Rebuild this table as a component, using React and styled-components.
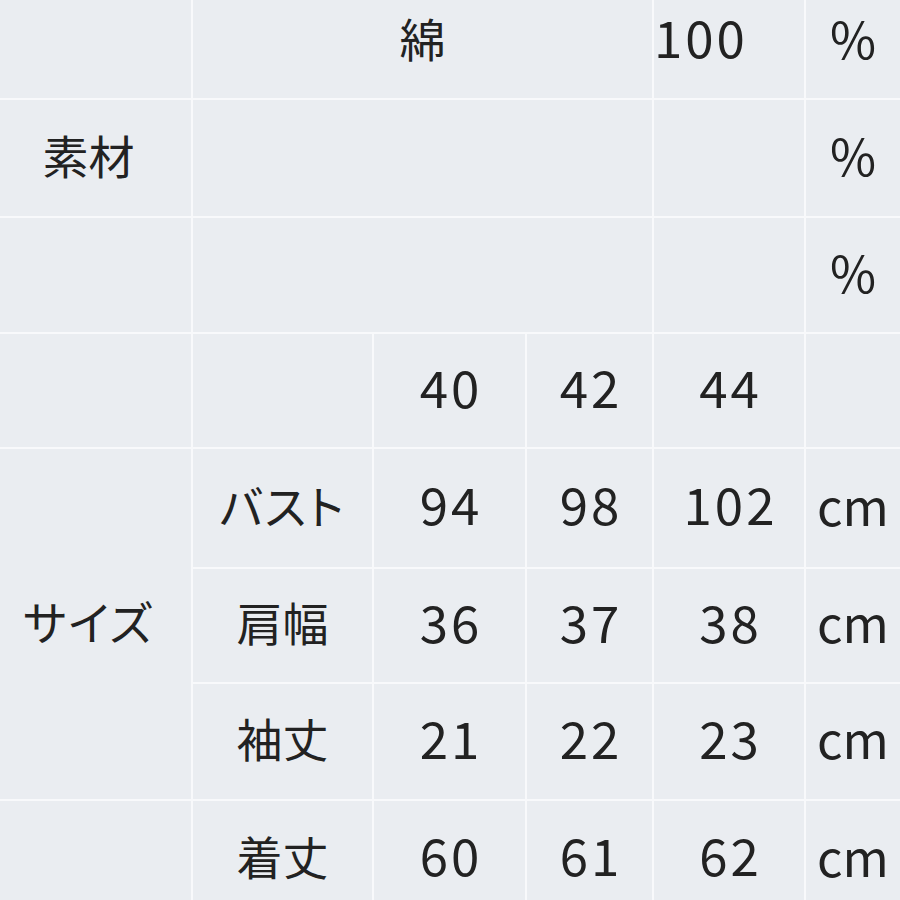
import React from "react";
import styled, { createGlobalStyle } from "styled-components";

// Page reset: the table fills the window edge to edge
const GlobalStyle = createGlobalStyle`
  html, body {
    margin: 0;
    padding: 0;
    background: #f8f9fb;
    overflow: hidden;
  }
  body {
    font-family: "Noto Sans CJK JP", "Noto Sans", sans-serif;
    color: #222;
  }
`;

const Sheet = styled.div`
  width: 900px;
  height: 900px;
  overflow: hidden;
`;

// The white gaps between cells are the grid lines
const Table = styled.div`
  display: grid;
  grid-template-columns: 191px 179px 151px 125px 150px 94px;
  grid-template-rows: 114px 116px 114px 113px 118px 113px 115px 116px;
  gap: 2px;
  margin-top: -16px;
  background: #f8f9fb;
`;

const Cell = styled.div`
  grid-column: ${(p) => p.col} / span ${(p) => p.colSpan || 1};
  grid-row: ${(p) => p.row} / span ${(p) => p.rowSpan || 1};
  display: flex;
  align-items: center;
  justify-content: ${(p) => (p.left ? "flex-start" : "center")};
  padding: 0 ${(p) => (p.head ? "14px" : "0")} 9px 0;
  background: #eaedf1;
  font-size: 46px;
  line-height: 1;
  white-space: nowrap;
`;

// katakana/kanji labels use proportional widths like the original
const Label = styled.span`
  font-feature-settings: "palt";
  letter-spacing: ${(p) => p.spacing || "0"};
`;

const Num = styled.span`
  font-size: 51px;
  letter-spacing: 3px;
  margin-right: -3px;
`;

const Unit = styled.span`
  font-size: 50px;
`;

const sizeRows = [
  { label: "バスト", values: ["94", "98", "102"] },
  { label: "肩幅", values: ["36", "37", "38"] },
  { label: "袖丈", values: ["21", "22", "23"] },
  { label: "着丈", values: ["60", "61", "62"] },
];

export default function App() {
  return (
    <Sheet>
      <GlobalStyle />
      <Table>
        {/* 素材 block */}
        <Cell row={1} col={1} />
        <Cell row={1} col={2} colSpan={3}>綿</Cell>
        <Cell row={1} col={5} left>
          <Num>100</Num>
        </Cell>
        <Cell row={1} col={6}><Unit>%</Unit></Cell>

        <Cell row={2} col={1} head>素材</Cell>
        <Cell row={2} col={2} colSpan={3} />
        <Cell row={2} col={5} />
        <Cell row={2} col={6}><Unit>%</Unit></Cell>

        <Cell row={3} col={1} />
        <Cell row={3} col={2} colSpan={3} />
        <Cell row={3} col={5} />
        <Cell row={3} col={6}><Unit>%</Unit></Cell>

        {/* size header */}
        <Cell row={4} col={1} />
        <Cell row={4} col={2} />
        {["40", "42", "44"].map((s, i) => (
          <Cell key={s} row={4} col={3 + i}>
            <Num>{s}</Num>
          </Cell>
        ))}
        <Cell row={4} col={6} />

        <Cell row={5} col={1} rowSpan={3} head>
          <Label spacing="2px">サイズ</Label>
        </Cell>
        <Cell row={8} col={1} />

        {sizeRows.map((r, ri) => (
          <React.Fragment key={r.label}>
            <Cell row={5 + ri} col={2}>
              <Label spacing={ri === 0 ? "2px" : "0"}>{r.label}</Label>
            </Cell>
            {r.values.map((v, vi) => (
              <Cell key={vi} row={5 + ri} col={3 + vi}>
                <Num>{v}</Num>
              </Cell>
            ))}
            <Cell row={5 + ri} col={6}><Unit>cm</Unit></Cell>
          </React.Fragment>
        ))}
      </Table>
    </Sheet>
  );
}
